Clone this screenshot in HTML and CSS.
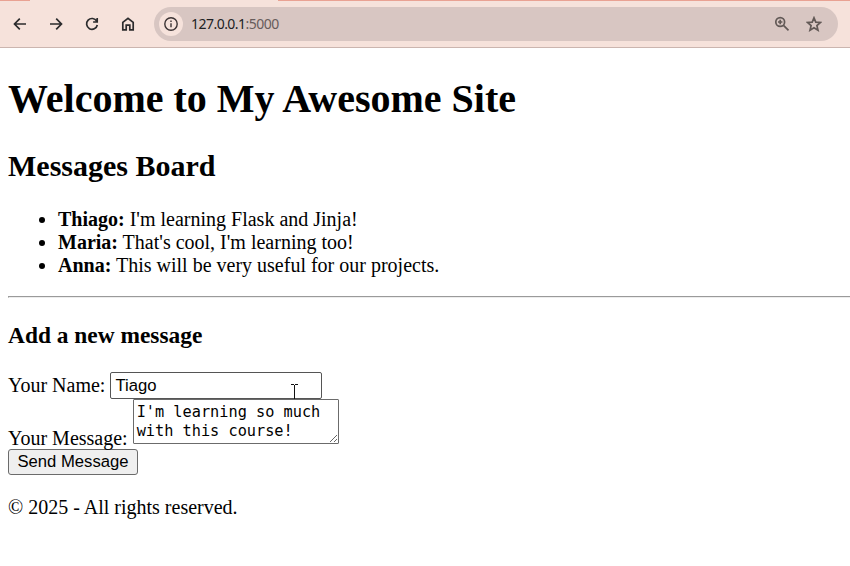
FILE: index.html
```html
<!DOCTYPE html>
<html lang="en">
<head>
<meta charset="utf-8">
<title>My Awesome Site</title>
<link rel="stylesheet" href="styles.css">
</head>
<body>
<header class="browser">
  <div class="tabs"><div class="tab-edge"></div><div class="tab-strip"></div></div>
  <nav class="toolbar">
    <svg class="nav-icon" viewBox="0 0 16 16"><path d="M14 8H2.7M7.8 2.7 2.5 8l5.3 5.3"/></svg>
    <svg class="nav-icon" viewBox="0 0 16 16"><path d="M2 8h11.3M8.2 2.7 13.5 8l-5.3 5.3"/></svg>
    <svg class="nav-icon" viewBox="0 0 16 16"><path d="M12.7 5.2A5.4 5.4 0 1 0 13.3 9M13.2 2v4H9.1"/></svg>
    <svg class="nav-icon" viewBox="0 0 16 16"><path d="M2.8 6.4 8 2.3l5.2 4.1v7.4H9.8V9.2H6.2v4.6H2.8z"/></svg>
    <div class="address">
      <span class="info"><svg class="info-icon" viewBox="0 0 16 16"><circle cx="8" cy="8" r="6.2"/><path d="M8 7.2v4M8 4.4v1.6"/></svg></span>
      <span class="url">127.0.0.1<span class="port">:5000</span></span>
      <svg class="action zoom" viewBox="0 0 16 16"><circle cx="6.2" cy="6" r="4.4"/><path d="m9.5 9.3 5 5M6.2 3.8v4.4M4 6h4.4"/></svg>
      <svg class="action" viewBox="0 0 16 16"><path d="m8 1.8 1.8 4.3 4.7.4-3.6 3.1 1.1 4.6-4-2.5-4 2.5 1.1-4.6-3.6-3.1 4.7-.4z"/></svg>
    </div>
  </nav>
</header>
<main class="page">
  <h1>Welcome to My Awesome Site</h1>
  <h2>Messages Board</h2>
  <ul>
    <li><strong>Thiago:</strong> I'm learning Flask and Jinja!</li>
    <li><strong>Maria:</strong> That's cool, I'm learning too!</li>
    <li><strong>Anna:</strong> This will be very useful for our projects.</li>
  </ul>
  <hr>
  <h3>Add a new message</h3>
  <form>
    <div class="row name-row">
      <label for="name">Your Name:</label>
      <div class="field"><input id="name" type="text" value="Tiago">
        <svg class="cursor" viewBox="0 0 7 15"><path d="M0 .5h3M4 .5h3M3.5 1v14"/></svg></div>
    </div>
    <div class="row message-row">
      <label for="message">Your Message:</label>
      <textarea id="message">I'm learning so much
with this course!</textarea>
    </div>
    <button type="button">Send Message</button>
  </form>
  <footer>© 2025 - All rights reserved.</footer>
</main>
</body>
</html>
```
FILE: styles.css
```css
* { box-sizing: border-box; }
body {
  margin: 0;
  background: #fff;
  color: #000;
  font: 20px/23px "Liberation Serif", serif;
  overflow: hidden;
}
.browser {
  height: 48px;
  background: #f6e2db;
  border-bottom: 1px solid #cbb5af;
}
.tabs { height: 1px; display: flex; justify-content: space-between; background: #f6e2db; }
.tab-edge { width: 30px; background: #e9a293; }
.tab-strip { width: 572px; background: #e9a293; }
.toolbar {
  height: 46px;
  display: flex;
  align-items: center;
  gap: 20px;
  padding: 0 12px;
}
.nav-icon { width: 16px; height: 16px; flex: none; fill: none; stroke: #2b2b2d; stroke-width: 1.7; }
.address {
  flex: 1;
  height: 34px;
  margin-left: -2px;
  padding: 0 16px 0 5px;
  border-radius: 17px;
  background: #d8c6c2;
  display: flex;
  align-items: center;
}
.info {
  width: 24px;
  height: 24px;
  border-radius: 50%;
  background: #f6e2db;
  display: flex;
  align-items: center;
  justify-content: center;
}
.info-icon { width: 16px; height: 16px; fill: none; stroke: #3b3334; stroke-width: 1.4; }
.url {
  margin-left: 8px;
  flex: 1;
  font: 14px/20px "Noto Sans", sans-serif;
  letter-spacing: -.53px;
  color: #202124;
}
.port { color: #675c5b; }
.action { width: 16px; height: 16px; fill: none; stroke: #625956; stroke-width: 1.7; }
.zoom { margin-right: 16px; }
.page { padding: 28px 0 0 8px; }
h1 { margin: 0; font-size: 40px; line-height: 46px; }
h2 { margin: 27px 0 0; font-size: 30px; line-height: 34px; }
ul { margin: 25px 0 0; padding-left: 50px; }
hr { margin: 19px 0 0; border: 1px solid #9a9a9a; border-bottom-color: #ededed; border-right: 0; }
h3 { margin: 24px 0 0; font-size: 23.4px; line-height: 27px; }
form { margin: 23px 0 0; }
.row { display: flex; }
.name-row { height: 27px; gap: 5px; align-items: center; }
.field { position: relative; width: 212px; height: 27px; }
input {
  display: block;
  width: 212px;
  height: 27px;
  padding: 1px 4px;
  border: 1px solid #555;
  border-radius: 2px;
  font: 16.67px "Liberation Sans", sans-serif;
  color: #000;
}
.cursor { position: absolute; left: 181px; top: 12px; width: 7px; height: 15px; stroke: #111; fill: none; }
.message-row { height: 50px; gap: 5px; }
.message-row label { margin-top: 28px; }
textarea {
  display: block;
  width: 206px;
  height: 45px;
  padding: 3px;
  border: 1px solid #6b6b6b;
  border-radius: 1px;
  overflow: hidden;
  font: 15.25px/19px "DejaVu Sans Mono", monospace;
  color: #000;
}
button {
  display: block;
  width: 130px;
  height: 26px;
  padding: 0;
  border: 1px solid #6b6b6b;
  border-radius: 3px;
  background: #efefef;
  color: #000;
  font: 16.67px "Liberation Sans", sans-serif;
}
footer { margin-top: 21px; }
```
